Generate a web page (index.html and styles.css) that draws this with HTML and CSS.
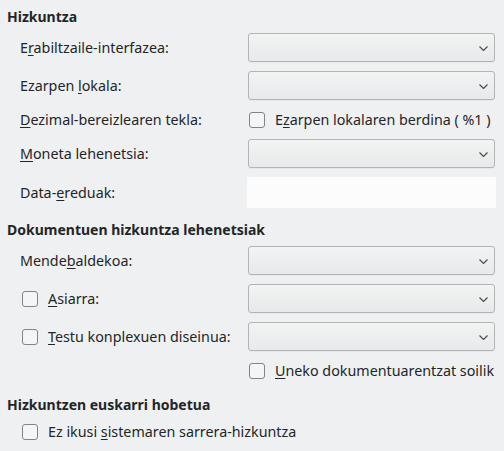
FILE: index.html
```html
<!DOCTYPE html>
<html lang="eu">
<head>
<meta charset="utf-8">
<link rel="stylesheet" href="styles.css">
<title>Hizkuntza</title>
</head>
<body>
<div class="page">
  <section class="sec sec1">
    <h2 class="head">Hizkuntza</h2>
    <div class="grid">
      <div class="label"><span>E<u>r</u>abiltzaile-interfazea:</span></div>
      <div class="combo"><svg class="chev" width="9" height="5" viewBox="0 0 9 5"><path d="M0.5 0.5 L4.5 4.5 L8.5 0.5" /></svg></div>

      <div class="label"><span>Ezarpen <u>l</u>okala:</span></div>
      <div class="combo"><svg class="chev" width="9" height="5" viewBox="0 0 9 5"><path d="M0.5 0.5 L4.5 4.5 L8.5 0.5" /></svg></div>

      <div class="label short"><span><u>D</u>ezimal-bereizlearen tekla:</span></div>
      <div class="check right short"><span class="box"></span><span>E<u>z</u>arpen lokalaren berdina ( %1 )</span></div>

      <div class="label"><span><u>M</u>oneta lehenetsia:</span></div>
      <div class="combo"><svg class="chev" width="9" height="5" viewBox="0 0 9 5"><path d="M0.5 0.5 L4.5 4.5 L8.5 0.5" /></svg></div>

      <div class="label tall"><span>Data-<u>e</u>reduak:</span></div>
      <div class="field"></div>
    </div>
  </section>

  <section class="sec sec2">
    <h2 class="head">Dokumentuen hizkuntza lehenetsiak</h2>
    <div class="grid">
      <div class="label"><span>Mende<u>b</u>aldekoa:</span></div>
      <div class="combo"><svg class="chev" width="9" height="5" viewBox="0 0 9 5"><path d="M0.5 0.5 L4.5 4.5 L8.5 0.5" /></svg></div>

      <div class="check left"><span class="box"></span><span><u>A</u>siarra:</span></div>
      <div class="combo"><svg class="chev" width="9" height="5" viewBox="0 0 9 5"><path d="M0.5 0.5 L4.5 4.5 L8.5 0.5" /></svg></div>

      <div class="check left"><span class="box"></span><span><u>T</u>estu konplexuen diseinua:</span></div>
      <div class="combo"><svg class="chev" width="9" height="5" viewBox="0 0 9 5"><path d="M0.5 0.5 L4.5 4.5 L8.5 0.5" /></svg></div>

      <div class="spacer"></div>
      <div class="check right short"><span class="box"></span><span><u>U</u>neko dokumentuarentzat soilik</span></div>
    </div>
  </section>

  <section class="sec sec3">
    <h2 class="head">Hizkuntzen euskarri hobetua</h2>
    <div class="list">
      <div class="check left short"><span class="box"></span><span>Ez ikusi <u>s</u>istemaren sarrera-hizkuntza</span></div>
    </div>
  </section>
</div>
</body>
</html>
```

FILE: styles.css
```css
html, body {
  margin: 0;
  padding: 0;
  background: #eff0f1;
}

body {
  font-family: "Noto Sans", "Open Sans", "DejaVu Sans", sans-serif;
  font-size: 14.3px;
  color: #232629;
}

.page {
  padding: 8px 9px 0 7px;
}

u {
  text-decoration: underline;
  text-decoration-thickness: 1px;
  text-underline-offset: 2px;
}

.head {
  margin: 0 0 7px 0;
  font-size: 14px;
  font-weight: bold;
  line-height: 18px;
  height: 18px;
}

.sec2 {
  margin-top: 13px;
}

.sec3 {
  margin-top: 15px;
}

.grid {
  display: grid;
  grid-template-columns: 241px 247px;
  row-gap: 9px;
}

.label {
  display: flex;
  align-items: center;
  height: 29px;
  padding-left: 13px;
  white-space: nowrap;
}

.label.short {
  height: 21px;
}

.label.tall {
  height: 31px;
}

.combo {
  position: relative;
  box-sizing: border-box;
  height: 29px;
  border: 1px solid #b3b4b5;
  border-radius: 3px;
  background: linear-gradient(#f2f3f3, #e8e9ea);
  box-shadow: 0 1px 0 rgba(0, 0, 0, 0.03);
  display: flex;
  align-items: center;
  justify-content: flex-end;
  padding-right: 6px;
}

.chev {
  display: block;
  margin-top: 1px;
}

.chev path {
  fill: none;
  stroke: #4d4f51;
  stroke-width: 1.2;
}

.field {
  height: 31px;
  margin: 0 -1px 0 -1px;
  background: #fcfcfc;
}

.check {
  display: flex;
  align-items: center;
  height: 29px;
  white-space: nowrap;
}

.check.short {
  height: 21px;
}

.check.left {
  padding-left: 15px;
  gap: 10px;
}

.check.right {
  padding-left: 1px;
  gap: 10px;
}

.box {
  box-sizing: border-box;
  width: 16px;
  height: 16px;
  flex: 0 0 16px;
  border: 1px solid #828486;
  border-radius: 3px;
  background: #f4f5f5;
}
```
